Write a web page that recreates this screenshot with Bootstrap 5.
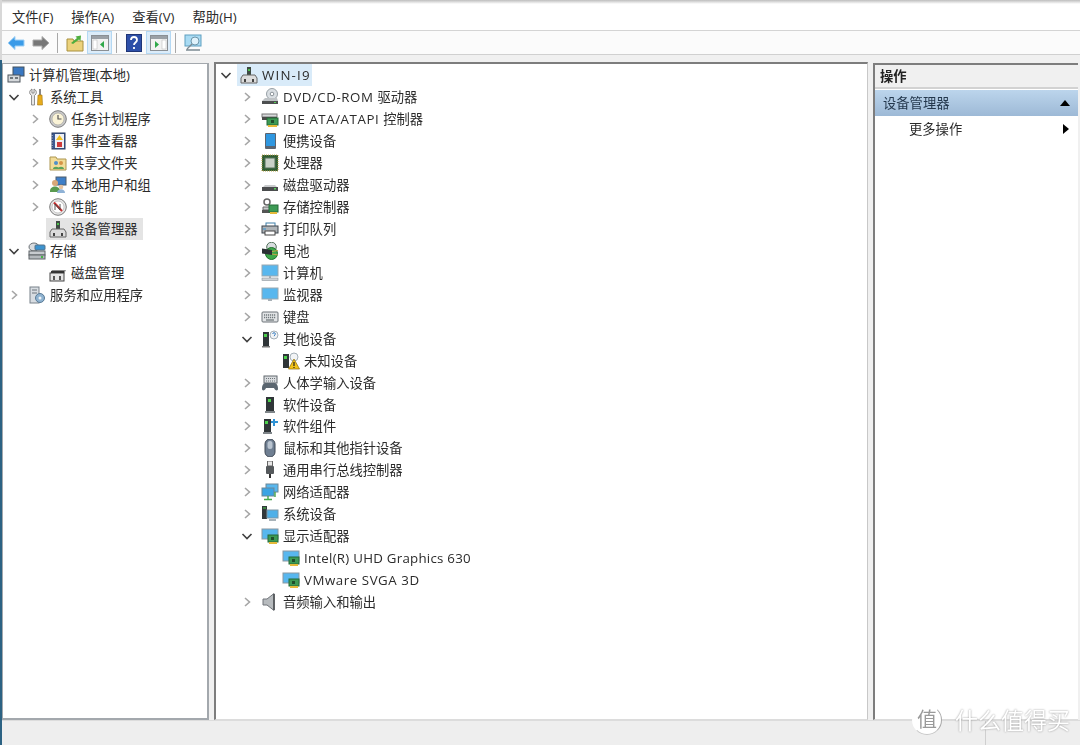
<!DOCTYPE html>
<html lang="zh-CN">
<head>
<meta charset="UTF-8">
<title>计算机管理</title>
<link href="https://cdn.jsdelivr.net/npm/bootstrap@5.3.0/dist/css/bootstrap.min.css" rel="stylesheet">
<style>
html, body { height: 745px; overflow: hidden; }
body { background: #f0f0f0; color: #2b2b2b; font: 13.3px/22px "Open Sans", "Noto Sans CJK SC", sans-serif; }
.app-shell { height: 745px; position: relative; filter: blur(.35px); }
.edge-strip { width: 2px; background: linear-gradient(#d8d8d8 0, #d8d8d8 60px, #2c6283 60px, #2c6283 100%); }
.title-fade { height: 4px; background: linear-gradient(#bdbdbd, #fff); }
.menu-bar { height: 26px; background: #fff; padding-left: 10px; gap: 18px; }
.tool-bar { height: 25px; background: #fbfbfb; border-top: 1px solid #d4d4d4; border-bottom: 1px solid #d0d0d0; padding-left: 5px; }
.tool-btn { width: 25px; height: 23px; }
.tool-btn.on { background: #dcecf9; border: 1px solid #b4d8f3; }
.tool-sep { width: 1px; height: 20px; background: #a8a8a8; margin: 0 8px 0 4px; }
.sep-first { margin-left: 7px; }
.back-gap { margin-right: 7px; }
.up-gap { margin-right: 3px; }
.help-gap { margin: 0 4px 0 1px; }
.pane-area { height: 657px; margin-top: 8px; }
.pane-left { width: 207px; background: #fff; border: 2px solid #a3a8ad; border-width: 1px 2px 2px 1px; }
.pane-mid { width: 654px; margin: -1px 0 0 5px; background: #fff; border-top: 2px solid #7d7d7d; border-left: 2px solid #7d7d7d; border-bottom: 1px solid #dcdcdc; border-right: 1px solid #c8c8c8; }
.pane-right { width: 205px; margin-left: 5px; background: #fff; border-top: 2px solid #7d7d7d; border-left: 2px solid #7d7d7d; border-bottom: 1px solid #dcdcdc; }
.tree-row { height: 22px; white-space: nowrap; }
.pane-mid .tree-row { height: 21.98px; }
.twisty { width: 16px; height: 22px; flex: none; }
.tree-label { height: 22px; margin-left: 3px; padding: 0 2px; }
.tree-label.sel-grey { background: #e4e4e4; padding-right: 6px; }
.tree-label.sel-blue { background: #d9ebf9; padding-right: 1px; }
.node-ico { width: 20px; height: 18px; flex: none; margin-right: 3px; }
.lv-root { padding-left: 3px; }
.lv-1 { padding-left: 3px; }
.lv-2 { padding-left: 24px; }
.mid-root { padding-left: 2px; }
.mid-1 { padding-left: 23px; }
.mid-2 { padding-left: 44px; }
.latin { letter-spacing: .25px; }
.latin-wide { letter-spacing: .55px; }
.latin-host { letter-spacing: 1.2px; }
.act-head { height: 24px; background: #f0f0f0; border-bottom: 2px solid #d2d2d2; padding-left: 5px; font-weight: 700; color: #222; }
.act-band { height: 26px; margin-top: 1px; background: linear-gradient(#bcd5ec, #9db9d6); padding: 0 8px; color: #24384d; }
.act-item { height: 26px; padding: 0 9px 0 34px; }
.tri-up { width: 0; height: 0; border: 5px solid transparent; border-top: 0; border-bottom: 6px solid #000; }
.tri-right { width: 0; height: 0; border: 5px solid transparent; border-right: 0; border-left: 6px solid #000; }
.status-bar { height: 25px; background: #eeeeee; border-top: 1px solid #dcdcdc; }
.status-cell { width: 95px; border-left: 1px solid #cfcfcf; }
.wm-badge { position: absolute; left: 912px; top: 705px; width: 30px; height: 30px; border-radius: 50%; background: #fff; border: 1px solid transparent; border-right-color: #a8a8a8; border-bottom-color: #c8c8c8; color: #9a9a9a; font-size: 20px; line-height: 27px; text-align: center; }
.wm-text { position: absolute; left: 955px; top: 705px; color: #fff; font-size: 23px; line-height: 30px; text-shadow: 0 0 2px #8c8c8c; white-space: nowrap; }
</style>
</head>
<body>
<svg width="0" height="0" class="position-absolute">
  <defs>
    <symbol id="back" viewBox="0 0 18 16"><path d="M1 8 8 1.500V5h9v6H8v3.500z" fill="#3b9be8" stroke="#9fd0f5"/></symbol>
    <symbol id="forward" viewBox="0 0 18 16"><path d="M17 8 10 1.500V5H1v6h9v3.500z" fill="#777" stroke="#aaa"/></symbol>
    <symbol id="upfolder" viewBox="0 0 18 18"><path d="M1 5h6l1 2h9v10H1z" fill="#ecd27c" stroke="#a8903f"/><path d="M5 9 11 4 9.500 2.500 15 1.500 14.500 7 13 5.500 7 10z" fill="#4fae3f"/></symbol>
    <symbol id="panel-l" viewBox="0 0 18 16"><rect x=".5" y=".5" width="17" height="15" fill="#f2f2f2" stroke="#8a8f94"/><rect x="1" y="1" width="16" height="3" fill="#9aa0a6"/><rect x="2" y="5" width="4" height="9" fill="#fff" stroke="#b5b5b5" stroke-width=".5"/><path d="M13 6v7l-4-3.500z" fill="#2fa84a"/></symbol>
    <symbol id="panel-r" viewBox="0 0 18 16"><rect x=".5" y=".5" width="17" height="15" fill="#f2f2f2" stroke="#8a8f94"/><rect x="1" y="1" width="16" height="3" fill="#9aa0a6"/><rect x="12" y="5" width="4" height="9" fill="#fff" stroke="#b5b5b5" stroke-width=".5"/><path d="M5 6v7l4-3.500z" fill="#2fa84a"/></symbol>
    <symbol id="helpbook" viewBox="0 0 16 18"><rect x=".5" y=".5" width="15" height="17" fill="#2d4fa8" stroke="#1f3576"/><path d="M5 6c0-4 6-4 6 0 0 2.500-3 2.500-3 5M8 13v2" fill="none" stroke="#fff" stroke-width="1.800"/></symbol>
    <symbol id="screen" viewBox="0 0 18 18"><rect x="1" y="1" width="16" height="11" fill="#a9dbf3" stroke="#5f9fc0"/><circle cx="11" cy="7" r="4" fill="#dff2fb" stroke="#6d96aa"/><path d="M8 10 3 15M2 16h14" stroke="#7c8a92" stroke-width="1.300" fill="none"/></symbol>

    <symbol id="compmgmt" viewBox="0 0 18 18"><rect x="6" y="1" width="11" height="9" fill="#3a78c2" stroke="#45525e"/><rect x="1" y="9" width="12" height="7" fill="#d5d8db" stroke="#4d555c"/><path d="M3 12h3M8 12h3" stroke="#4d555c" stroke-width="1.500"/></symbol>
    <symbol id="tools" viewBox="0 0 18 18"><path d="M6 1v4H4V1C2 2 1 4 2 6l1.500 1.500V17h3V7.500L8 6c1-2 0-4-2-5z" fill="#e8e8e8" stroke="#777" stroke-width=".8"/><rect x="11" y="1" width="2" height="6" fill="#888"/><path d="M10 7h4l.5 10h-5z" fill="#e8ac1c" stroke="#a27510" stroke-width=".6"/></symbol>
    <symbol id="clock" viewBox="0 0 18 18"><circle cx="9" cy="9" r="8.300" fill="#c9c9c9" stroke="#7d7d7d"/><circle cx="9" cy="9" r="6" fill="#faf3d6" stroke="#9a9a9a" stroke-width=".6"/><path d="M9 5v4h3.500" fill="none" stroke="#555" stroke-width="1.200"/></symbol>
    <symbol id="eventlog" viewBox="0 0 18 18"><rect x="3" y="1" width="13" height="16" fill="#3d5a92" stroke="#2a3c60"/><rect x="6" y="2" width="9" height="14" fill="#eef0f5"/><path d="M10.500 3 14 8H7z" fill="#f0c020"/><rect x="8" y="10" width="5" height="5" fill="#cf3a3a"/><path d="M3 3v13" stroke="#aeb8cc" stroke-dasharray="1 1.500" stroke-width="1.500"/></symbol>
    <symbol id="sharedfolder" viewBox="0 0 18 18"><path d="M1 3h6l1 2h9v11H1z" fill="#f2dc98" stroke="#ac9651"/><circle cx="7" cy="9" r="2" fill="#4f8fc9"/><circle cx="12" cy="9" r="2" fill="#d69347"/><path d="M4 15c0-3 6-3 6 0zM9 15c0-3 6-3 6 0z" fill="#5aa35a"/></symbol>
    <symbol id="users" viewBox="0 0 18 18"><rect x="7" y="1" width="10" height="8" fill="#3f7fc8" stroke="#4d5d6d"/><circle cx="6" cy="7" r="3" fill="#d9a878"/><path d="M1 15c0-6 10-6 10 0v1H1z" fill="#5a9a4f"/><circle cx="12" cy="11" r="2.300" fill="#e6c3a0"/><path d="M8 17c0-5 8-5 8 0z" fill="#8fb2d6"/></symbol>
    <symbol id="perf" viewBox="0 0 18 18"><circle cx="9" cy="9" r="8.300" fill="#e6e6e6" stroke="#7b7b7b"/><circle cx="9" cy="9" r="6" fill="#fff" stroke="#a8a8a8" stroke-width=".6"/><path d="M5 4.500 13 13" stroke="#c83030" stroke-width="2"/><path d="M6 12V6l5 6V6" fill="none" stroke="#444" stroke-width=".9"/></symbol>
    <symbol id="devmgr" viewBox="0 0 18 18"><rect x="7" y="1" width="4" height="8" fill="#3e4a42"/><rect x="8" y="3" width="2" height="2" fill="#4bc04b"/><path d="M3 9h12l2 3v5H1v-5z" fill="#dcdcdc" stroke="#666"/><path d="M5 13v3M13 13v3" stroke="#333" stroke-width="1.800"/></symbol>
    <symbol id="storage" viewBox="0 0 18 18"><ellipse cx="6" cy="5" rx="5" ry="4" fill="#d9dcdf" stroke="#6b7176"/><rect x="7" y="3" width="10" height="5" rx="1" fill="#3c93cf" stroke="#55738a"/><rect x="1" y="9" width="16" height="4" fill="#c7cbcf" stroke="#5f6468"/><rect x="1" y="13" width="16" height="4" fill="#b4b9bd" stroke="#5f6468"/><rect x="13" y="14" width="2" height="2" fill="#49b649"/></symbol>
    <symbol id="diskmgmt" viewBox="0 0 18 18"><path d="M3 6h14l-2 4H1z" fill="#8c8c8c"/><rect x="1" y="9" width="14" height="8" fill="#e6e6e6" stroke="#444"/><path d="M2 8h13" stroke="#333" stroke-width="2"/><path d="M5 12v4M11 12v4" stroke="#333" stroke-width="1.600"/></symbol>
    <symbol id="services" viewBox="0 0 18 18"><rect x="2" y="1" width="9" height="16" fill="#d8dde2" stroke="#78818a"/><path d="M4 4h5M4 7h5" stroke="#6c757d"/><circle cx="12" cy="12" r="4.500" fill="#8fb3d1" stroke="#5a7b96"/><circle cx="12" cy="12" r="1.500" fill="#eef3f7"/></symbol>

    <symbol id="dvd" viewBox="0 0 18 18"><circle cx="11" cy="6" r="5.500" fill="#dadfe3" stroke="#98a0a6"/><circle cx="11" cy="6" r="1.800" fill="#fff" stroke="#8a9298"/><path d="M1 13l3-3h12l1 3z" fill="#bfc3c6"/><rect x="1" y="13" width="16" height="3" fill="#4d4f50"/><rect x="13" y="14" width="2" height="1" fill="#58d058"/></symbol>
    <symbol id="ide" viewBox="0 0 18 18"><rect x="1" y="4" width="15" height="3" fill="#d7d9db" stroke="#777"/><rect x="1" y="7" width="15" height="3" fill="#4a4a4a"/><rect x="6" y="8" width="11" height="7" fill="#3d9a55" stroke="#256b38"/><rect x="10" y="10" width="3" height="3" fill="#1e4f2b"/><path d="M7 15h9v2H7z" fill="#e5b93a"/></symbol>
    <symbol id="portable" viewBox="0 0 18 18"><rect x="4" y="1" width="11" height="16" rx="1" fill="#5b6470"/><rect x="5" y="2" width="9" height="12" fill="#2f97e0"/></symbol>
    <symbol id="cpu" viewBox="0 0 18 18"><rect x="1" y="1" width="16" height="16" fill="#2f5d33" stroke="#b8a04a" stroke-dasharray="1 1"/><rect x="4" y="4" width="10" height="10" fill="#c9d1c8" stroke="#54705a"/></symbol>
    <symbol id="disk" viewBox="0 0 18 18"><path d="M2 11l2-2h10l2 2z" fill="#c8cacc"/><rect x="1" y="11" width="16" height="4" fill="#4b4d4e"/><rect x="13" y="12" width="2" height="1.500" fill="#58d058"/></symbol>
    <symbol id="storctl" viewBox="0 0 18 18"><circle cx="6" cy="4" r="3" fill="none" stroke="#666" stroke-width="1.500"/><path d="M2 9h10v3H2z" fill="#c9cbcd" stroke="#666"/><rect x="1" y="12" width="10" height="3" fill="#555"/><rect x="8" y="7" width="9" height="7" fill="#3d9a55" stroke="#256b38"/><path d="M9 14h7v2H9z" fill="#e5b93a"/></symbol>
    <symbol id="printer" viewBox="0 0 18 18"><rect x="5" y="3" width="9" height="4" fill="#fff" stroke="#3f7fa8"/><rect x="1" y="6" width="16" height="7" fill="#aeb3b7" stroke="#3c454c"/><rect x="4" y="11" width="10" height="4" fill="#fff" stroke="#444"/><path d="M2 9h3" stroke="#2f8fd0"/></symbol>
    <symbol id="battery" viewBox="0 0 18 18"><circle cx="10.500" cy="5" r="4.800" fill="#d9dde0" stroke="#4f6f58"/><circle cx="10.500" cy="11.500" r="6" fill="#3da84a" stroke="#1f6f2c"/><path d="M1 6.500 11 8v5L1 11.500z" fill="#2b3034"/><path d="M11 9.500l6-1M11 12l6 1" stroke="#c7a44a"/></symbol>
    <symbol id="computer" viewBox="0 0 18 18"><rect x="1" y="1" width="16" height="11" fill="#58b7ee" stroke="#9aa7af"/><path d="M8 12h2v2H8z" fill="#a8b0b6"/><rect x="1" y="14" width="16" height="2.500" fill="#cdd2d6" stroke="#8c959b" stroke-width=".6"/></symbol>
    <symbol id="monitor" viewBox="0 0 18 18"><rect x="1" y="2" width="16" height="11" fill="#58b7ee" stroke="#9aa7af"/><path d="M7 13h4v2H7z" fill="#a8b0b6"/></symbol>
    <symbol id="keyboard" viewBox="0 0 18 18"><rect x="1" y="4" width="16" height="10" rx="1" fill="#e2e4e6" stroke="#6c7378"/><path d="M3 7h12M3 9.500h12" stroke="#70777c" stroke-dasharray="1.200 .8" stroke-width="1.300"/><path d="M5 12h8" stroke="#70777c" stroke-width="1.300"/></symbol>
    <symbol id="other" viewBox="0 0 18 18"><rect x="2" y="2" width="6" height="14" fill="#2f3538"/><rect x="3" y="4" width="3" height="3" fill="#4bd04b"/><rect x="1" y="16" width="8" height="1.500" fill="#777"/><circle cx="13" cy="5" r="4" fill="#f2f4f6" stroke="#a5b0b8"/><path d="M11.700 4c0-1.800 2.700-1.800 2.700 0 0 1-1.300 1-1.300 2.200" fill="none" stroke="#3a7fc2"/></symbol>
    <symbol id="unknown" viewBox="0 0 18 18"><rect x="1" y="2" width="6" height="14" fill="#2f3538"/><rect x="2" y="4" width="3" height="3" fill="#4bd04b"/><circle cx="12" cy="5" r="4" fill="#f2f4f6" stroke="#a5b0b8"/><path d="M12 7 17.500 17h-11z" fill="#f2c31a" stroke="#8c6c06" stroke-width=".7"/><path d="M12 10v4M12 15v1" stroke="#222" stroke-width="1.200"/></symbol>
    <symbol id="hid" viewBox="0 0 18 18"><rect x="3" y="2" width="13" height="7" fill="#d9dcdf" stroke="#62696f"/><path d="M5 4.500h9M5 7h9" stroke="#6d7479" stroke-dasharray="1 1"/><path d="M1 15c0-5 2-6 4-6h8c2 0 4 1 4 6 0 2-3 2-4-1H5c-1 3-4 3-4 1z" fill="#5b6670"/></symbol>
    <symbol id="softdev" viewBox="0 0 18 18"><rect x="5" y="1" width="8" height="14" fill="#2f3538"/><rect x="7" y="3" width="3" height="3" fill="#4bd04b"/><rect x="4" y="15" width="10" height="2" fill="#7f8589"/></symbol>
    <symbol id="softcomp" viewBox="0 0 18 18"><rect x="3" y="2" width="7" height="13" fill="#2f3538"/><rect x="4" y="4" width="3" height="3" fill="#4bd04b"/><rect x="2" y="15" width="9" height="2" fill="#7f8589"/><path d="M13 2v7M10 5h7" stroke="#2f93d6" stroke-width="2"/></symbol>
    <symbol id="mouse" viewBox="0 0 18 18"><rect x="4" y="0" width="10" height="18" rx="5" fill="#6f7f92" stroke="#3f4854"/><rect x="6.500" y="2" width="5" height="8" rx="2.500" fill="#b9c4d0"/></symbol>
    <symbol id="usb" viewBox="0 0 18 18"><rect x="6.500" y="0" width="5" height="5" fill="#e8e8e8" stroke="#666"/><rect x="5" y="5" width="8" height="8" rx="1" fill="#55595c"/><path d="M9 13v4" stroke="#333" stroke-width="2"/></symbol>
    <symbol id="network" viewBox="0 0 18 18"><rect x="5" y="1" width="12" height="8" fill="#58b7ee" stroke="#6d8797"/><rect x="1" y="5" width="12" height="8" fill="#3ba4e4" stroke="#6d8797"/><path d="M7 13v3M3 16.500h8M14 9v5" stroke="#47a94d" stroke-width="1.400"/></symbol>
    <symbol id="sysdev" viewBox="0 0 18 18"><rect x="1" y="1" width="5" height="13" fill="#33383b"/><path d="M2 3h3" stroke="#4bd04b"/><rect x="6" y="5" width="11" height="8" fill="#4fb0e8" stroke="#7e97a6"/><path d="M8 15h7" stroke="#8d9aa2" stroke-width="1.500"/></symbol>
    <symbol id="display" viewBox="0 0 18 18"><rect x="1" y="2" width="16" height="10" fill="#58b7ee" stroke="#8a98a1"/><rect x="7" y="8" width="10" height="7" fill="#3d9a55" stroke="#256b38"/><rect x="10" y="10" width="3" height="3" fill="#1e4f2b"/><path d="M8 15h8v2H8z" fill="#e5b93a"/></symbol>
    <symbol id="speaker" viewBox="0 0 18 18"><path d="M2 6h4l7-5.500v17L6 12H2z" fill="#b7bbbe" stroke="#70757a"/><path d="M13 1v16" stroke="#55595c" stroke-width="1.800"/></symbol>
    <symbol id="chev-r" viewBox="0 0 16 22"><path d="M6 7l4.500 4L6 15" fill="none" stroke="#a6a6a6" stroke-width="1.600"/></symbol>
    <symbol id="chev-d" viewBox="0 0 16 22"><path d="M3.500 9l4.500 4.500L12.500 9" fill="none" stroke="#404040" stroke-width="1.600"/></symbol>
  </defs>
</svg>

<div class="app-shell d-flex">
  <div class="edge-strip flex-shrink-0"></div>
  <div class="flex-grow-1 d-flex flex-column">
    <div class="title-fade"></div>
    <div class="menu-bar d-flex align-items-center">
      <span>文件(F)</span><span>操作(A)</span><span>查看(V)</span><span>帮助(H)</span>
    </div>
    <div class="tool-bar d-flex align-items-center">
      <svg width="18" height="16" class="back-gap"><use href="#back"/></svg>
      <svg width="18" height="16"><use href="#forward"/></svg>
      <span class="tool-sep sep-first"></span>
      <svg width="18" height="18" class="up-gap"><use href="#upfolder"/></svg>
      <span class="tool-btn on d-flex align-items-center justify-content-center"><svg width="18" height="16"><use href="#panel-l"/></svg></span>
      <span class="tool-sep"></span>
      <svg width="16" height="18" class="help-gap"><use href="#helpbook"/></svg>
      <span class="tool-btn on d-flex align-items-center justify-content-center"><svg width="18" height="16"><use href="#panel-r"/></svg></span>
      <span class="tool-sep"></span>
      <svg width="18" height="18"><use href="#screen"/></svg>
    </div>

    <div class="pane-area d-flex">
      <div class="pane-left flex-shrink-0">
        <div class="tree-row d-flex align-items-center lv-root"><svg class="node-ico"><use href="#compmgmt"/></svg><span>计算机管理(本地)</span></div>
        <div class="tree-row d-flex align-items-center lv-1"><svg class="twisty"><use href="#chev-d"/></svg><span class="tree-label d-flex align-items-center"><svg class="node-ico"><use href="#tools"/></svg><span>系统工具</span></span></div>
        <div class="tree-row d-flex align-items-center lv-2"><svg class="twisty"><use href="#chev-r"/></svg><span class="tree-label d-flex align-items-center"><svg class="node-ico"><use href="#clock"/></svg><span>任务计划程序</span></span></div>
        <div class="tree-row d-flex align-items-center lv-2"><svg class="twisty"><use href="#chev-r"/></svg><span class="tree-label d-flex align-items-center"><svg class="node-ico"><use href="#eventlog"/></svg><span>事件查看器</span></span></div>
        <div class="tree-row d-flex align-items-center lv-2"><svg class="twisty"><use href="#chev-r"/></svg><span class="tree-label d-flex align-items-center"><svg class="node-ico"><use href="#sharedfolder"/></svg><span>共享文件夹</span></span></div>
        <div class="tree-row d-flex align-items-center lv-2"><svg class="twisty"><use href="#chev-r"/></svg><span class="tree-label d-flex align-items-center"><svg class="node-ico"><use href="#users"/></svg><span>本地用户和组</span></span></div>
        <div class="tree-row d-flex align-items-center lv-2"><svg class="twisty"><use href="#chev-r"/></svg><span class="tree-label d-flex align-items-center"><svg class="node-ico"><use href="#perf"/></svg><span>性能</span></span></div>
        <div class="tree-row d-flex align-items-center lv-2"><span class="twisty"></span><span class="tree-label sel-grey d-flex align-items-center"><svg class="node-ico"><use href="#devmgr"/></svg><span>设备管理器</span></span></div>
        <div class="tree-row d-flex align-items-center lv-1"><svg class="twisty"><use href="#chev-d"/></svg><span class="tree-label d-flex align-items-center"><svg class="node-ico"><use href="#storage"/></svg><span>存储</span></span></div>
        <div class="tree-row d-flex align-items-center lv-2"><span class="twisty"></span><span class="tree-label d-flex align-items-center"><svg class="node-ico"><use href="#diskmgmt"/></svg><span>磁盘管理</span></span></div>
        <div class="tree-row d-flex align-items-center lv-1"><svg class="twisty"><use href="#chev-r"/></svg><span class="tree-label d-flex align-items-center"><svg class="node-ico"><use href="#services"/></svg><span>服务和应用程序</span></span></div>
      </div>

      <div class="pane-mid flex-shrink-0">
        <div class="tree-row d-flex align-items-center mid-root"><svg class="twisty"><use href="#chev-d"/></svg><span class="tree-label sel-blue d-flex align-items-center"><svg class="node-ico"><use href="#devmgr"/></svg><span class="latin-host">WIN-I9</span></span></div>
        <div class="tree-row d-flex align-items-center mid-1"><svg class="twisty"><use href="#chev-r"/></svg><span class="tree-label d-flex align-items-center"><svg class="node-ico"><use href="#dvd"/></svg><span><span class="latin-wide">DVD/CD-ROM </span>驱动器</span></span></div>
        <div class="tree-row d-flex align-items-center mid-1"><svg class="twisty"><use href="#chev-r"/></svg><span class="tree-label d-flex align-items-center"><svg class="node-ico"><use href="#ide"/></svg><span><span class="latin-wide">IDE ATA/ATAPI </span>控制器</span></span></div>
        <div class="tree-row d-flex align-items-center mid-1"><svg class="twisty"><use href="#chev-r"/></svg><span class="tree-label d-flex align-items-center"><svg class="node-ico"><use href="#portable"/></svg><span>便携设备</span></span></div>
        <div class="tree-row d-flex align-items-center mid-1"><svg class="twisty"><use href="#chev-r"/></svg><span class="tree-label d-flex align-items-center"><svg class="node-ico"><use href="#cpu"/></svg><span>处理器</span></span></div>
        <div class="tree-row d-flex align-items-center mid-1"><svg class="twisty"><use href="#chev-r"/></svg><span class="tree-label d-flex align-items-center"><svg class="node-ico"><use href="#disk"/></svg><span>磁盘驱动器</span></span></div>
        <div class="tree-row d-flex align-items-center mid-1"><svg class="twisty"><use href="#chev-r"/></svg><span class="tree-label d-flex align-items-center"><svg class="node-ico"><use href="#storctl"/></svg><span>存储控制器</span></span></div>
        <div class="tree-row d-flex align-items-center mid-1"><svg class="twisty"><use href="#chev-r"/></svg><span class="tree-label d-flex align-items-center"><svg class="node-ico"><use href="#printer"/></svg><span>打印队列</span></span></div>
        <div class="tree-row d-flex align-items-center mid-1"><svg class="twisty"><use href="#chev-r"/></svg><span class="tree-label d-flex align-items-center"><svg class="node-ico"><use href="#battery"/></svg><span>电池</span></span></div>
        <div class="tree-row d-flex align-items-center mid-1"><svg class="twisty"><use href="#chev-r"/></svg><span class="tree-label d-flex align-items-center"><svg class="node-ico"><use href="#computer"/></svg><span>计算机</span></span></div>
        <div class="tree-row d-flex align-items-center mid-1"><svg class="twisty"><use href="#chev-r"/></svg><span class="tree-label d-flex align-items-center"><svg class="node-ico"><use href="#monitor"/></svg><span>监视器</span></span></div>
        <div class="tree-row d-flex align-items-center mid-1"><svg class="twisty"><use href="#chev-r"/></svg><span class="tree-label d-flex align-items-center"><svg class="node-ico"><use href="#keyboard"/></svg><span>键盘</span></span></div>
        <div class="tree-row d-flex align-items-center mid-1"><svg class="twisty"><use href="#chev-d"/></svg><span class="tree-label d-flex align-items-center"><svg class="node-ico"><use href="#other"/></svg><span>其他设备</span></span></div>
        <div class="tree-row d-flex align-items-center mid-2"><span class="twisty"></span><span class="tree-label d-flex align-items-center"><svg class="node-ico"><use href="#unknown"/></svg><span>未知设备</span></span></div>
        <div class="tree-row d-flex align-items-center mid-1"><svg class="twisty"><use href="#chev-r"/></svg><span class="tree-label d-flex align-items-center"><svg class="node-ico"><use href="#hid"/></svg><span>人体学输入设备</span></span></div>
        <div class="tree-row d-flex align-items-center mid-1"><svg class="twisty"><use href="#chev-r"/></svg><span class="tree-label d-flex align-items-center"><svg class="node-ico"><use href="#softdev"/></svg><span>软件设备</span></span></div>
        <div class="tree-row d-flex align-items-center mid-1"><svg class="twisty"><use href="#chev-r"/></svg><span class="tree-label d-flex align-items-center"><svg class="node-ico"><use href="#softcomp"/></svg><span>软件组件</span></span></div>
        <div class="tree-row d-flex align-items-center mid-1"><svg class="twisty"><use href="#chev-r"/></svg><span class="tree-label d-flex align-items-center"><svg class="node-ico"><use href="#mouse"/></svg><span>鼠标和其他指针设备</span></span></div>
        <div class="tree-row d-flex align-items-center mid-1"><svg class="twisty"><use href="#chev-r"/></svg><span class="tree-label d-flex align-items-center"><svg class="node-ico"><use href="#usb"/></svg><span>通用串行总线控制器</span></span></div>
        <div class="tree-row d-flex align-items-center mid-1"><svg class="twisty"><use href="#chev-r"/></svg><span class="tree-label d-flex align-items-center"><svg class="node-ico"><use href="#network"/></svg><span>网络适配器</span></span></div>
        <div class="tree-row d-flex align-items-center mid-1"><svg class="twisty"><use href="#chev-r"/></svg><span class="tree-label d-flex align-items-center"><svg class="node-ico"><use href="#sysdev"/></svg><span>系统设备</span></span></div>
        <div class="tree-row d-flex align-items-center mid-1"><svg class="twisty"><use href="#chev-d"/></svg><span class="tree-label d-flex align-items-center"><svg class="node-ico"><use href="#display"/></svg><span>显示适配器</span></span></div>
        <div class="tree-row d-flex align-items-center mid-2"><span class="twisty"></span><span class="tree-label d-flex align-items-center"><svg class="node-ico"><use href="#display"/></svg><span class="latin">Intel(R) UHD Graphics 630</span></span></div>
        <div class="tree-row d-flex align-items-center mid-2"><span class="twisty"></span><span class="tree-label d-flex align-items-center"><svg class="node-ico"><use href="#display"/></svg><span class="latin-wide">VMware SVGA 3D</span></span></div>
        <div class="tree-row d-flex align-items-center mid-1"><svg class="twisty"><use href="#chev-r"/></svg><span class="tree-label d-flex align-items-center"><svg class="node-ico"><use href="#speaker"/></svg><span>音频输入和输出</span></span></div>
      </div>

      <div class="pane-right flex-shrink-0">
        <div class="act-head d-flex align-items-center">操作</div>
        <div class="act-band d-flex align-items-center justify-content-between"><span>设备管理器</span><span class="tri-up"></span></div>
        <div class="act-item d-flex align-items-center justify-content-between"><span>更多操作</span><span class="tri-right"></span></div>
      </div>
    </div>

    <div class="status-bar d-flex justify-content-end">
      <div class="status-cell"></div>
    </div>
  </div>
  <div class="wm-badge">值</div>
  <div class="wm-text">什么值得买</div>
</div>
<script src="https://cdn.jsdelivr.net/npm/bootstrap@5.3.0/dist/js/bootstrap.bundle.min.js"></script>
</body>
</html>
